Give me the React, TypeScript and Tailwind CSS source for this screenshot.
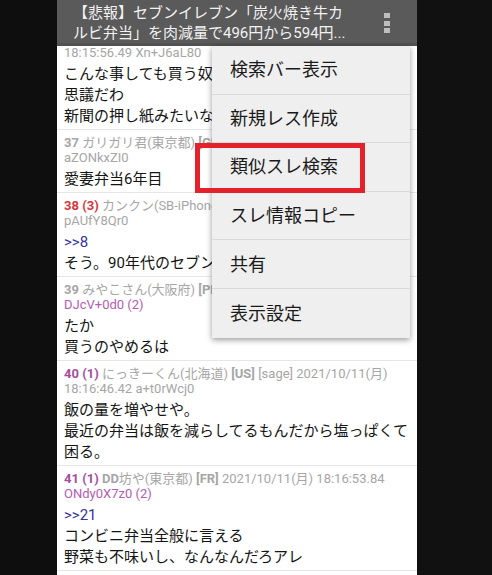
import React from "react";

type Post = {
  meta1: React.ReactNode;
  meta2: React.ReactNode;
  body: React.ReactNode[];
};

const posts: Post[] = [
  {
    meta1: (
      <>
        <span className="font-bold">37</span> ガリガリ君(東京都) <span className="font-bold">[GB]</span> 2021/10/11(月) 18:16:02.11
      </>
    ),
    meta2: <>aZONkxZI0</>,
    body: ["愛妻弁当6年目"],
  },
  {
    meta1: (
      <>
        <span className="font-bold text-[#d8363c]">38 (3)</span> カンクン(SB-iPhone) <span className="font-bold">[ES]</span> 2021/10/11(月) 18:16:10.58
      </>
    ),
    meta2: <>pAUfY8Qr0</>,
    body: [<span className="text-[#34349a]">&gt;&gt;8</span>, "そう。90年代のセブンイレブンは美味かった"],
  },
  {
    meta1: (
      <>
        <span className="font-bold">39</span> みやこさん(大阪府) <span className="font-bold">[PH]</span> 2021/10/11(月) 18:16:31.07
      </>
    ),
    meta2: <span className="text-[#b35cb3]">DJcV+0d0 (2)</span>,
    body: ["たか", "買うのやめるは"],
  },
  {
    meta1: (
      <>
        <span className="font-bold text-[#a24e9e]">40 (1)</span> にっきーくん(北海道) <span className="font-bold">[US]</span> [sage] 2021/10/11(月)
      </>
    ),
    meta2: <>18:16:46.42 a+t0rWcj0</>,
    body: ["飯の量を増やせや。", "最近の弁当は飯を減らしてるもんだから塩っぱくて", "困る。"],
  },
  {
    meta1: (
      <>
        <span className="font-bold text-[#a24e9e]">41 (1)</span> <span className="font-bold">DD</span>坊や(東京都) <span className="font-bold">[FR]</span> 2021/10/11(月) 18:16:53.84
      </>
    ),
    meta2: <span className="text-[#b35cb3]">ONdy0X7z0 (2)</span>,
    body: [<span className="text-[#34349a]">&gt;&gt;21</span>, "コンビニ弁当全般に言える", "野菜も不味いし、なんなんだろアレ"],
  },
];

const menuItems = ["検索バー表示", "新規レス作成", "類似スレ検索", "スレ情報コピー", "共有", "表示設定"];

function PostRow({ post }: { post: Post }) {
  return (
    <div className="border-b border-[#e6e6e6] px-[7px] pt-[5px] pb-[2px]">
      <div className="text-[13px] leading-[15px] text-[#a6a6a6] whitespace-nowrap overflow-hidden">{post.meta1}</div>
      <div className="text-[13px] leading-[15px] text-[#a6a6a6] whitespace-nowrap overflow-hidden">{post.meta2}</div>
      <div className="mt-[4px] text-[15px] leading-[21px] text-[#151515]">
        {post.body.map((line, i) => (
          <div key={i} className="whitespace-nowrap overflow-hidden">
            {line}
          </div>
        ))}
      </div>
    </div>
  );
}

export default function App() {
  return (
    <div
      className="w-[492px] h-[575px] flex bg-[#0e0e0e] overflow-hidden"
      style={{ fontFamily: "Roboto, 'Noto Sans CJK JP', sans-serif" }}
    >
      <div className="w-[57px] shrink-0 bg-[#0e0e0e]" />
      <div className="relative w-[360px] shrink-0 h-full bg-white overflow-hidden">
        {/* title bar */}
        <div className="h-[46px] bg-[#5a5a5a] flex items-start border-b-[3px] border-[#525252]">
          <div className="flex-1 pl-[16px] pt-[3px] text-[15px] leading-[20px] text-[#f2f2f2]">
            <div className="whitespace-nowrap">【悲報】セブンイレブン「炭火焼き牛カ</div>
            <div className="whitespace-nowrap">ルビ弁当」を肉減量で496円から594円...</div>
          </div>
          <div className="w-[62px] pt-[13px] flex flex-col items-center gap-[2.5px] pl-[2px]">
            <div className="w-[6px] h-[5px] bg-[#bdbdbd]" />
            <div className="w-[6px] h-[5px] bg-[#bdbdbd]" />
            <div className="w-[6px] h-[5px] bg-[#bdbdbd]" />
          </div>
        </div>

        {/* posts */}
        <div className="-mt-[3px]">
          <div className="border-b border-[#e6e6e6] px-[7px] pt-[2px] pb-[2px]">
            <div className="text-[13px] leading-[15px] text-[#a6a6a6] whitespace-nowrap">18:15:56.49 Xn+J6aL80</div>
            <div className="mt-[4px] text-[15px] leading-[21px] text-[#151515]">
              <div className="whitespace-nowrap overflow-hidden">こんな事しても買う奴がいるってのがホント不</div>
              <div className="whitespace-nowrap overflow-hidden">思議だわ</div>
              <div className="whitespace-nowrap overflow-hidden">新聞の押し紙みたいなもんだろ</div>
            </div>
          </div>
          {posts.map((p, i) => (
            <PostRow key={i} post={p} />
          ))}
        </div>

        {/* overflow menu */}
        <div className="absolute left-[155px] top-[46px] w-[198px] bg-[#efefef] shadow-[0_2px_6px_rgba(0,0,0,0.4)]">
          {menuItems.map((item, i) => (
            <div
              key={item}
              className={`h-[48.6px] flex items-center pl-[18px] text-[18px] text-[#1a1a1a] ${
                i < menuItems.length - 1 ? "border-b border-[#dadada]" : ""
              }`}
            >
              {item}
            </div>
          ))}
        </div>

        {/* highlight box */}
        <div className="absolute left-[138px] top-[143px] w-[170px] h-[50px] border-[5px] border-[#e3222b]" />
      </div>
      <div className="flex-1 bg-[#111111]" />
    </div>
  );
}
